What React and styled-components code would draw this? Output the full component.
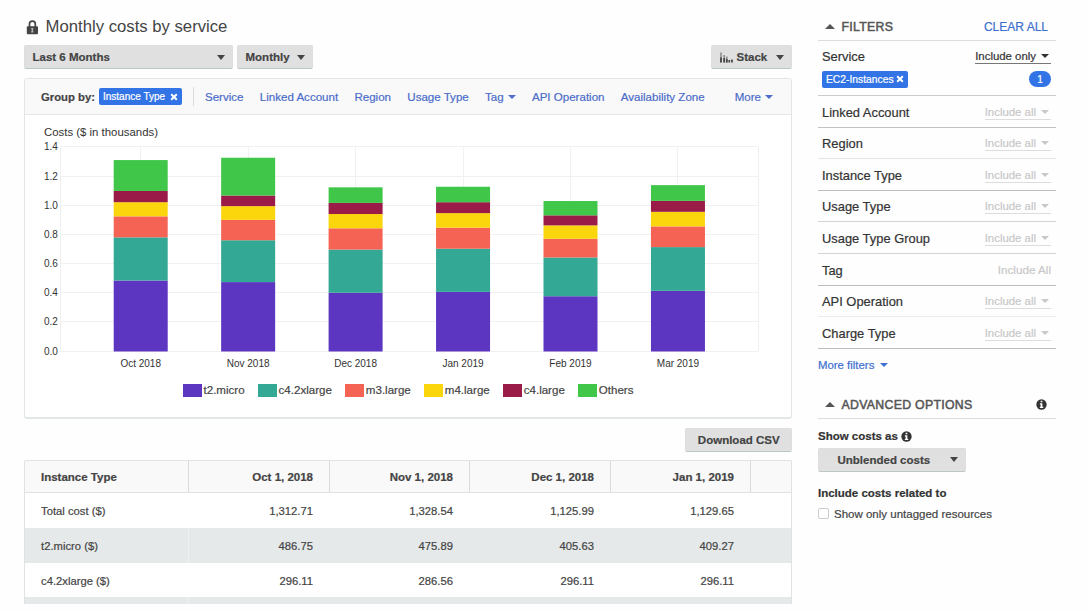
import { Fragment } from "react";
import styled, { createGlobalStyle } from "styled-components";

const GlobalStyle = createGlobalStyle`
    *, *:before {
        box-sizing: border-box;
    }

    body {
        margin: 0;
        background: #fefefe;
        color: #444;
        font-family: "Liberation Sans", Arial, sans-serif;
        font-size: 11.5px;
        -webkit-text-stroke: 0.2px currentColor;
    }
`

const Page = styled.div`
    display: flex;
    align-items: flex-start;
    gap: 26px;
    width: 1089px;
    height: 612px;
    overflow: hidden;
    padding: 15px 0 0 24px;
`

const Main = styled.main`
    width: 768px;
`

const Sidebar = styled.aside`
    width: 238px;
`

const Title = styled.h1`
    display: flex;
    align-items: center;
    gap: 6.6px;
    height: 24px;
    margin: 0 0 6px;
    padding-left: 2px;
    font-size: 16.7px;
    font-weight: 400;
    -webkit-text-stroke: 0;
`

const Toolbar = styled.div`
    display: flex;
    gap: 4px;
    height: 24px;
    margin-bottom: 9px;
`

const Spacer = styled.div`
    flex: 1;
`

const Button = styled.button`
    display: flex;
    align-items: center;
    justify-content: ${(props) => props.$center ? 'center' : 'space-between'};
    width: ${(props) => props.$width}px;
    height: 24px;
    padding: 0 7px 0 ${(props) => props.$indent || 7.5}px;
    border: 1px solid #dedede;
    border-bottom-color: #bcc6c6;
    border-radius: 2px;
    background: #e0e0e0;
    color: #444;
    font: bold 11.5px "Liberation Sans", Arial, sans-serif;
    white-space: nowrap;
`

const ButtonLabel = styled.span`
    display: flex;
    align-items: center;
    gap: 4px;
`

const Caret = styled.span`
    display: inline-block;
    border: 4px solid transparent;
    border-top: 5px solid currentColor;
    border-bottom: 0;
`

const SmallCaret = styled(Caret)`
    border-width: 4px 4px 0;
`

const UpCaret = styled(Caret)`
    border-width: 5px 5px 0;
    transform: rotate(180deg);
`

const Panel = styled.section`
    height: 341px;
    border: 1px solid #e2e6e6;
    border-bottom-width: 2px;
    border-radius: 3px;
    background: #fff;
`

const GroupBar = styled.div`
    display: flex;
    align-items: center;
    height: 36px;
    padding: 0 18px 0 16px;
    border-bottom: 1px solid #e6e8e8;
    background: #f9f9f9;
`

const GroupLabel = styled.b`
    width: 58px;
    font-size: 11.3px;
`

const Tag = styled.span`
    display: flex;
    align-items: center;
    justify-content: space-between;
    width: ${(props) => props.$width}px;
    height: 17px;
    padding: 0 4px;
    border-radius: 2px;
    background: #3273e6;
    color: #fff;
    font-size: ${(props) => props.$size}px;
    white-space: nowrap;
`

const Divider = styled.span`
    height: 19px;
    margin: 0 11px;
    border-left: 1px solid #ddd;
`

const GroupLinks = styled.nav`
    display: flex;
    flex: 1;
    gap: 16.3px;
`

const GroupLink = styled.a`
    display: flex;
    align-items: center;
    gap: 4px;
    color: #4b6cc9;
    font-size: 11.55px;
    white-space: nowrap;

    &:last-child {
        margin-left: auto;
    }
`

const Chart = styled.svg`
    display: block;
    width: 766px;
    height: 261px;

    text {
        fill: #333;
        font-size: 10px;
    }
`

const Legend = styled.div`
    display: flex;
    justify-content: center;
    gap: 13px;
    padding-top: 7px;
`

const LegendItem = styled.span`
    display: flex;
    align-items: center;
    gap: 2px;
    height: 14px;
    font-size: 11.55px;

    &:before {
        content: '';
        width: 19px;
        height: 13px;
        background: ${(props) => props.$color};
    }
`

const Actions = styled.div`
    display: flex;
    justify-content: flex-end;
    padding: 9px 0 8px;
`

const TableFrame = styled.div`
    height: 144px;
    overflow: hidden;
    border: 1px solid #dfe3e3;
    border-bottom: 0;
    border-radius: 2px 2px 0 0;
`

const Table = styled.div`
    display: grid;
    grid-template-columns: 164px 141px 140px 141px 140px 1fr;
    grid-template-rows: 32px repeat(4, 34.8px);
`

const HeadCell = styled.div`
    display: flex;
    align-items: center;
    justify-content: ${(props) => props.$first ? 'flex-start' : 'flex-end'};
    padding: 0 16px;
    border-right: 1px solid #d9dcdc;
    border-bottom: 1px solid #dfe3e3;
    background: #f9f9f9;
    font-weight: bold;

    &:nth-child(6) {
        border-right: 0;
    }
`

const Cell = styled.div`
    display: flex;
    align-items: center;
    justify-content: ${(props) => props.$first ? 'flex-start' : 'flex-end'};
    padding: 1.5px 16px 0;
    border-right: ${(props) => props.$first && props.$striped ? '1px solid #eef1f1' : '1px solid transparent'};
    background: ${(props) => props.$striped ? '#e5e9e9' : '#fff'};
    font-size: 11.25px;
`

const SectionHead = styled.header`
    display: flex;
    align-items: center;
    height: ${(props) => props.$height}px;
    padding: 0 8px ${(props) => props.$bottom || 0}px 6.5px;
    border-bottom: 1px solid #ddd;
    color: #555;

    h2 {
        flex: 1;
        margin: 0 0 0 7px;
        font-size: 12.3px;
        font-weight: 400;
        letter-spacing: 0.3px;
        -webkit-text-stroke: 0.5px currentColor;
    }

    a {
        color: #3d6fce;
        font-size: 12px;
    }

    svg {
        margin-right: 1px;
    }
`

const Filter = styled.div`
    height: ${(props) => props.$tall ? 55 : 31.62}px;
    padding: ${(props) => props.$tall ? 6 : 7}px 5px 0 4px;
    border-bottom: 1px solid ${(props) => props.$line};
    color: #333;
    font-size: 12.9px;
`

const FilterRow = styled.div`
    display: flex;
    align-items: center;
    justify-content: space-between;
    height: 18px;

    & + & {
        margin-top: 5px;
    }
`

const FilterSelect = styled.span`
    display: flex;
    align-items: center;
    gap: 5px;
    height: 15px;
    padding-right: ${(props) => props.$plain ? 0 : 2}px;
    border-bottom: 1px solid ${(props) => props.$plain ? 'transparent' : props.$active ? '#777' : '#ddd'};
    color: ${(props) => props.$active ? '#333' : '#c8c8c8'};
    font-size: ${(props) => props.$plain ? 11.7 : 11.4}px;
`

const Count = styled.span`
    display: flex;
    align-items: center;
    justify-content: center;
    width: 22px;
    height: 16px;
    border-radius: 8px;
    background: #3273e6;
    color: #fff;
    font-size: 10px;
`

const MoreFilters = styled.a`
    display: flex;
    align-items: center;
    gap: 6px;
    height: 32px;
    margin-bottom: 11px;
    color: #3d6fce;
    font-size: 11.4px;
`

const OptionLabel = styled.div`
    display: flex;
    align-items: center;
    gap: 3px;
    height: 14px;
    margin: ${(props) => props.$top}px 0 5px;
    color: #333;
    font-weight: bold;

    svg {
        margin-top: 1px;
    }
`

const CheckLabel = styled.label`
    display: flex;
    align-items: center;
    gap: 5px;
    margin-top: 8px;

    &:before {
        content: '';
        width: 11px;
        height: 11px;
        border: 1px solid #ccc;
        border-radius: 2px;
        background: #fff;
    }
`

const series = [
    { name: 't2.micro', color: '#5c36c0' },
    { name: 'c4.2xlarge', color: '#32a895' },
    { name: 'm3.large', color: '#f56355' },
    { name: 'm4.large', color: '#fcd60c' },
    { name: 'c4.large', color: '#9a1a48' },
    { name: 'Others', color: '#40c74a' },
]

const months = [
    { label: 'Oct 2018', values: [0.487, 0.296, 0.144, 0.097, 0.077, 0.212] },
    { label: 'Nov 2018', values: [0.476, 0.287, 0.14, 0.094, 0.073, 0.259] },
    { label: 'Dec 2018', values: [0.403, 0.296, 0.146, 0.098, 0.076, 0.107] },
    { label: 'Jan 2019', values: [0.409, 0.296, 0.144, 0.1, 0.075, 0.106] },
    { label: 'Feb 2019', values: [0.379, 0.266, 0.128, 0.092, 0.069, 0.098] },
    { label: 'Mar 2019', values: [0.416, 0.3, 0.142, 0.1, 0.075, 0.108] },
]

const groups = ['Service', 'Linked Account', 'Region', 'Usage Type', 'Tag', 'API Operation', 'Availability Zone', 'More']

const columns = ['Instance Type', 'Oct 1, 2018', 'Nov 1, 2018', 'Dec 1, 2018', 'Jan 1, 2019', '']

const rows = [
    ['Total cost ($)', '1,312.71', '1,328.54', '1,125.99', '1,129.65', ''],
    ['t2.micro ($)', '486.75', '475.89', '405.63', '409.27', ''],
    ['c4.2xlarge ($)', '296.11', '286.56', '296.11', '296.11', ''],
    ['', '', '', '', '', ''],
]

const filters = [
    { name: 'Linked Account', line: '#c2c2c2' },
    { name: 'Region', line: '#e4e4e4' },
    { name: 'Instance Type', line: '#bdbdbd' },
    { name: 'Usage Type', line: '#d4d4d4' },
    { name: 'Usage Type Group', line: '#d4d4d4' },
    { name: 'Tag', line: '#bdbdbd', plain: true },
    { name: 'API Operation', line: '#ececec' },
    { name: 'Charge Type', line: '#bdbdbd' },
]

function LockIcon() {
    return (
        <svg width="13" height="15" viewBox="0 0 13 15">
            <path d="M3.500 7V4a2.900 2.900 0 0 1 5.800 0V7" fill="none" stroke="#444" strokeWidth="1.7" />
            <rect x="0.800" y="6.300" width="11.200" height="7.900" rx="1" fill="#444" />
            <path d="M5.300 7.900h2v1.700h-.4v1.600h.5v1.200H5.200v-1.200h.5V9.600h-.4z" fill="#bbb" />
        </svg>
    )
}

function StackIcon() {
    return (
        <svg width="13" height="11" viewBox="0 0 13 11">
            <path d="M1 0.500V10.500M4.200 3V10.500M6.800 4.500V10.500" stroke="#888" strokeWidth="1.5" />
            <path d="M1 5.500V10.500M4.200 6V10.500M6.800 7V10.500M9.300 8V10.500M12 7.500V10.500" stroke="#444" strokeWidth="1.7" />
        </svg>
    )
}

function InfoIcon() {
    return (
        <svg width="11" height="11" viewBox="0 0 10 10">
            <circle cx="5" cy="5" r="4.700" fill="#333" />
            <path d="M4.200 1.500h1.600v1.400H4.200zM3.500 3.800h2.300v3.300h.8v1.100H3.500V7.100h.7V4.900h-.7z" fill="#fff" />
        </svg>
    )
}

function CloseIcon() {
    return (
        <svg width="8" height="8" viewBox="0 0 8 8">
            <path d="M1.200 1.200l5.600 5.600M6.800 1.200L1.200 6.800" stroke="#fff" strokeWidth="2" />
        </svg>
    )
}

const BASE = 236.5
const SCALE = 145.8

const ChartTitle = styled.text`
    && {
        font-size: 11.4px;
    }
`

function CostChart() {
    return (
        <Chart viewBox="0 0 766 261">
            <ChartTitle x="19" y="20.500">Costs ($ in thousands)</ChartTitle>
            {[0, 1, 2, 3, 4, 5, 6, 7].map((tick) => {
                const y = Math.round(BASE - tick * 0.2 * SCALE) - 0.5
                return (
                    <Fragment key={tick}>
                        <path d={`M35.500 ${y}H733.500`} stroke="#f1f1f1" />
                        <text x="32.800" y={y + 3.5} textAnchor="end">{(tick * 0.2).toFixed(1)}</text>
                    </Fragment>
                )
            })}
            <path d="M35.500 32V236M733.500 32V236" stroke="#efefef" />
            {months.map((month, i) => {
                const center = 115.7 + i * 107.45
                let top = BASE
                return (
                    <g key={month.label}>
                        <path d={`M${Math.floor(center) + 0.5} 32V236`} stroke="#f1f1f1" />
                        {month.values.map((value, j) => {
                            top -= value * SCALE
                            return <rect key={j} x={center - 27} y={top} width="54" height={value * SCALE} fill={series[j].color} />
                        })}
                        <text x={center} y="252" textAnchor="middle">{month.label}</text>
                    </g>
                )
            })}
        </Chart>
    )
}

function CostTable() {
    return (
        <TableFrame>
            <Table>
                {columns.map((column, i) => <HeadCell key={i} $first={i === 0}>{column}</HeadCell>)}
                {rows.map((row, r) => row.map((value, i) => (
                    <Cell key={`${r}-${i}`} $first={i === 0} $striped={r % 2 === 1}>{value}</Cell>
                )))}
            </Table>
        </TableFrame>
    )
}

function Filters() {
    return (
        <>
            <SectionHead $height={26} $bottom={2}>
                <UpCaret />
                <h2>FILTERS</h2>
                <a>CLEAR ALL</a>
            </SectionHead>
            <Filter $tall $line="#ccc">
                <FilterRow>
                    Service
                    <FilterSelect $active>Include only <SmallCaret /></FilterSelect>
                </FilterRow>
                <FilterRow>
                    <Tag $width={86} $size={10.3}>EC2-Instances <CloseIcon /></Tag>
                    <Count>1</Count>
                </FilterRow>
            </Filter>
            {filters.map(({ name, line, plain }) => (
                <Filter key={name} $line={line}>
                    <FilterRow>
                        {name}
                        {plain
                        ? <FilterSelect $plain>Include All</FilterSelect>
                        : <FilterSelect>Include all <SmallCaret /></FilterSelect>}
                    </FilterRow>
                </Filter>
            ))}
            <MoreFilters>More filters <SmallCaret /></MoreFilters>
        </>
    )
}

export default function App() {
    return (
        <Page>
            <GlobalStyle />
            <Main>
                <Title><LockIcon />Monthly costs by service</Title>
                <Toolbar>
                    <Button $width={209}>Last 6 Months <Caret /></Button>
                    <Button $width={76}>Monthly <Caret /></Button>
                    <Spacer />
                    <Button $width={81}>
                        <ButtonLabel><StackIcon />Stack</ButtonLabel>
                        <Caret />
                    </Button>
                </Toolbar>
                <Panel>
                    <GroupBar>
                        <GroupLabel>Group by:</GroupLabel>
                        <Tag $width={83} $size={10}>Instance Type <CloseIcon /></Tag>
                        <Divider />
                        <GroupLinks>
                            {groups.map((group) => (
                                <GroupLink key={group}>
                                    {group}
                                    {(group === 'Tag' || group === 'More') && <SmallCaret />}
                                </GroupLink>
                            ))}
                        </GroupLinks>
                    </GroupBar>
                    <CostChart />
                    <Legend>
                        {series.map(({ name, color }) => <LegendItem key={name} $color={color}>{name}</LegendItem>)}
                    </Legend>
                </Panel>
                <Actions>
                    <Button $center $width={107}>Download CSV</Button>
                </Actions>
                <CostTable />
            </Main>
            <Sidebar>
                <Filters />
                <SectionHead $height={27}>
                    <UpCaret />
                    <h2>ADVANCED OPTIONS</h2>
                    <InfoIcon />
                </SectionHead>
                <OptionLabel $top={10}>Show costs as <InfoIcon /></OptionLabel>
                <Button $width={148} $indent={18.5}>Unblended costs <Caret /></Button>
                <OptionLabel $top={14}>Include costs related to</OptionLabel>
                <CheckLabel>Show only untagged resources</CheckLabel>
            </Sidebar>
        </Page>
    )
}
